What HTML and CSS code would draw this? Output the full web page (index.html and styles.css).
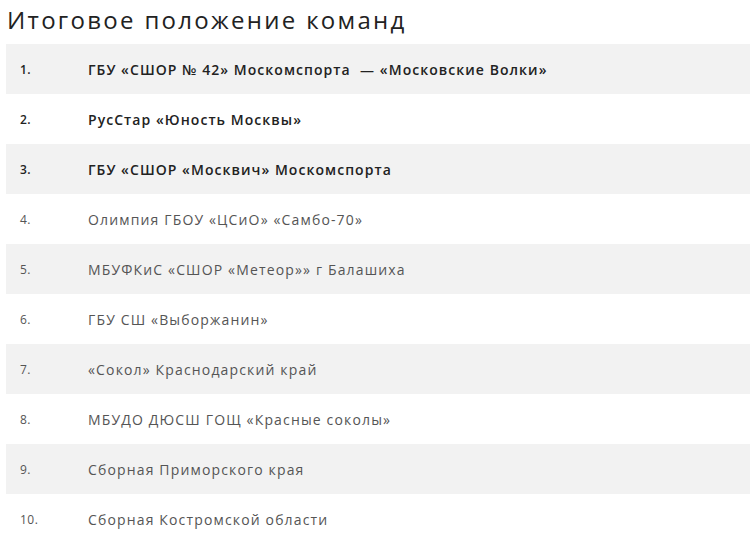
FILE: index.html
```html
<!DOCTYPE html>
<html lang="ru">
<head>
<meta charset="utf-8">
<link rel="stylesheet" href="styles.css">
</head>
<body>
<div class="page">
  <h2 class="title">Итоговое положение команд</h2>
  <div class="table">
    <div class="row odd top"><span class="num">1.</span><span class="name">ГБУ «СШОР № 42» Москомспорта &nbsp;— «Московские Волки»</span></div>
    <div class="row top"><span class="num">2.</span><span class="name">РусСтар «Юность Москвы»</span></div>
    <div class="row odd top"><span class="num">3.</span><span class="name">ГБУ «СШОР «Москвич» Москомспорта</span></div>
    <div class="row"><span class="num">4.</span><span class="name">Олимпия ГБОУ «ЦСиО» «Самбо-70»</span></div>
    <div class="row odd"><span class="num">5.</span><span class="name">МБУФКиС «СШОР «Метеор»» г Балашиха</span></div>
    <div class="row"><span class="num">6.</span><span class="name">ГБУ СШ «Выборжанин»</span></div>
    <div class="row odd"><span class="num">7.</span><span class="name">«Сокол» Краснодарский край</span></div>
    <div class="row"><span class="num">8.</span><span class="name">МБУДО ДЮСШ ГОЩ «Красные соколы»</span></div>
    <div class="row odd"><span class="num">9.</span><span class="name">Сборная Приморского края</span></div>
    <div class="row"><span class="num">10.</span><span class="name">Сборная Костромской области</span></div>
  </div>
</div>
</body>
</html>
```

FILE: styles.css
```css
html, body {
  margin: 0;
  padding: 0;
  background: #ffffff;
  overflow: hidden;
}
.page {
  padding: 0 0 0 6px;
  width: 760px;
  font-family: "Open Sans", "Noto Sans", sans-serif;
}
.title {
  margin: 0;
  height: 44px;
  font-size: 24px;
  line-height: 40px;
  font-weight: 400;
  letter-spacing: 2.3px;
  color: #222222;
  padding-left: 1px;
}
.table {
  display: flex;
  flex-direction: column;
}
.row {
  display: flex;
  align-items: center;
  height: 50px;
  font-size: 14px;
  color: #555555;
  letter-spacing: 1.15px;
}
.row.odd {
  background: #f2f2f2;
}
.row.top {
  color: #222222;
  font-weight: 600;
  letter-spacing: 1.05px;
}
.num {
  width: 68px;
  padding-left: 14px;
  font-size: 12px;
  letter-spacing: 0.5px;
}
.name {
  white-space: nowrap;
}
```
